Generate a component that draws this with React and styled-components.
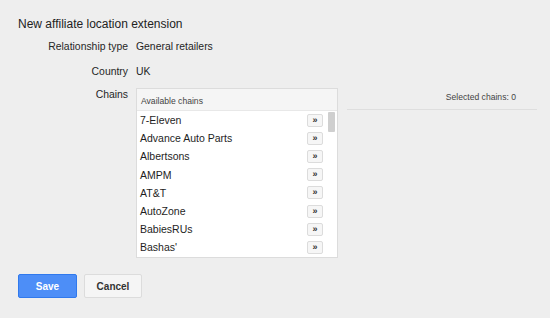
import React from 'react'
import styled, { createGlobalStyle } from 'styled-components'

const GlobalStyle = createGlobalStyle`
  html, body {
    margin: 0;
    padding: 0;
    background: #eeeeee;
    font-family: "Liberation Sans", Arial, sans-serif;
    color: #222;
  }
`

const Page = styled.div`
  width: 550px;
  height: 318px;
  padding: 16px 0 0 18px;
  box-sizing: border-box;
  overflow: hidden;
`

const Title = styled.h1`
  margin: 0 0 7px 0;
  font-size: 12px;
  font-weight: normal;
  line-height: 16px;
  color: #222;
`

const FieldRow = styled.div`
  display: flex;
  align-items: flex-start;
  margin-bottom: ${p => p.gap || 9}px;
`

const Label = styled.div`
  flex: none;
  width: 110px;
  padding-right: 8px;
  margin-top: ${p => p.shift || 0}px;
  text-align: right;
  font-size: 10.4px;
  line-height: 16px;
  color: #262626;
`

const Value = styled.div`
  font-size: 10.4px;
  line-height: 16px;
  color: #1e1e1e;
`

const ChainsArea = styled.div`
  display: flex;
  align-items: flex-start;
`

const ListBox = styled.div`
  flex: none;
  width: 202px;
  height: 170px;
  box-sizing: border-box;
  border: 1px solid #dcdcdc;
  background: #fff;
  display: flex;
  flex-direction: column;
`

const ListHeader = styled.div`
  height: 22px;
  flex: none;
  background: #f5f5f5;
  border-bottom: 1px solid #e8e8e8;
  font-size: 8.6px;
  color: #444;
  padding: 7px 0 0 4px;
  box-sizing: border-box;
`

const ListBody = styled.div`
  display: flex;
  flex: 1;
  min-height: 0;
`

const Items = styled.ul`
  list-style: none;
  margin: 0;
  padding: 0;
  flex: 1;
`

const Item = styled.li`
  height: 18.2px;
  display: flex;
  align-items: center;
  justify-content: space-between;
  padding: 0 5px 0 3px;
  font-size: 10.5px;
  color: #1e1e1e;
`

const AddButton = styled.span`
  width: 16px;
  height: 13px;
  box-sizing: border-box;
  border: 1px solid #dcdcdc;
  border-radius: 2px;
  background: #f6f6f6;
  font-size: 9px;
  font-weight: bold;
  line-height: 11px;
  text-align: center;
  color: #333;
`

const Scrollbar = styled.div`
  width: 7px;
  flex: none;
  margin-right: 2px;
  padding-top: 1px;
`

const Thumb = styled.div`
  height: 20px;
  background: #cfcfcf;
  border-radius: 1px;
`

const Selected = styled.div`
  flex: none;
  width: 190px;
  margin-left: 9px;
  margin-top: 4px;
  font-size: 8.6px;
  line-height: 10px;
  color: #444;
  text-align: right;
  padding: 0 21px 7px 0;
  box-sizing: border-box;
  border-bottom: 1px solid #dedede;
`

const Actions = styled.div`
  display: flex;
  gap: 7px;
  margin-top: 16px;
`

const Button = styled.button`
  width: ${p => p.w}px;
  height: 24px;
  border-radius: 2px;
  font-family: "Liberation Sans", Arial, sans-serif;
  font-size: 10px;
  font-weight: bold;
  cursor: pointer;
  border: 1px solid ${p => (p.primary ? '#3079ed' : '#dcdcdc')};
  background: ${p => (p.primary ? '#4d8ef7' : '#f5f5f5')};
  color: ${p => (p.primary ? '#fff' : '#333')};
`

const chains = [
  '7-Eleven',
  'Advance Auto Parts',
  'Albertsons',
  'AMPM',
  'AT&T',
  'AutoZone',
  'BabiesRUs',
  "Bashas'",
]

const App = () => {
  return (
    <Page>
      <GlobalStyle />
      <Title>New affiliate location extension</Title>
      <FieldRow>
        <Label>Relationship type</Label>
        <Value>General retailers</Value>
      </FieldRow>
      <FieldRow gap={8}>
        <Label>Country</Label>
        <Value>UK</Value>
      </FieldRow>
      <ChainsArea>
        <Label shift={-1}>Chains</Label>
        <ListBox>
          <ListHeader>Available chains</ListHeader>
          <ListBody>
            <Items>
              {chains.map(c => (
                <Item key={c}>
                  <span>{c}</span>
                  <AddButton>»</AddButton>
                </Item>
              ))}
            </Items>
            <Scrollbar>
              <Thumb />
            </Scrollbar>
          </ListBody>
        </ListBox>
        <Selected>Selected chains: 0</Selected>
      </ChainsArea>
      <Actions>
        <Button primary w={59}>Save</Button>
        <Button w={58}>Cancel</Button>
      </Actions>
    </Page>
  )
}

export default App
